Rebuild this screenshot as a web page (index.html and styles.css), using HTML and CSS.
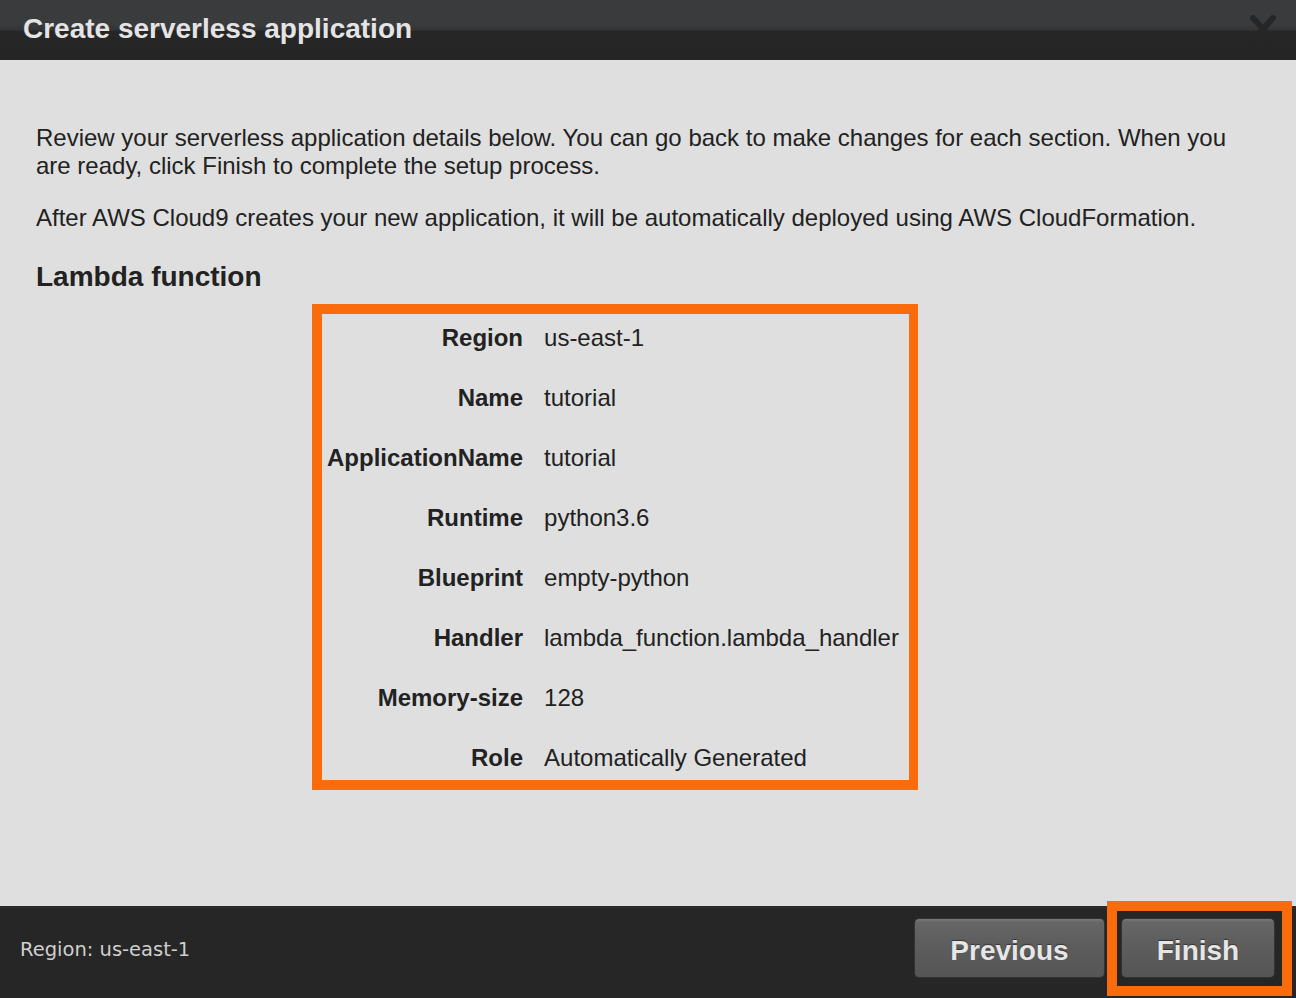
FILE: index.html
```html
<!DOCTYPE html>
<html>
<head>
<meta charset="utf-8">
<link rel="stylesheet" href="styles.css">
</head>
<body>
<div class="dialog">
  <header class="titlebar">
    <h1 class="title">Create serverless application</h1>
    <svg class="close" width="30" height="32" viewBox="0 0 30 32"><path d="M5 5 L25 27 M25 5 L5 27" stroke="#262626" stroke-width="6" stroke-linecap="round"/></svg>
  </header>
  <main class="content">
    <p class="para">Review your serverless application details below. You can go back to make changes for each section. When you are ready, click Finish to complete the setup process.</p>
    <p class="para">After AWS Cloud9 creates your new application, it will be automatically deployed using AWS CloudFormation.</p>
    <h2 class="section">Lambda function</h2>
    <div class="summary">
      <div class="grid">
        <div class="label">Region</div><div class="value">us-east-1</div>
        <div class="label">Name</div><div class="value">tutorial</div>
        <div class="label">ApplicationName</div><div class="value">tutorial</div>
        <div class="label">Runtime</div><div class="value">python3.6</div>
        <div class="label">Blueprint</div><div class="value">empty-python</div>
        <div class="label">Handler</div><div class="value">lambda_function.lambda_handler</div>
        <div class="label">Memory-size</div><div class="value">128</div>
        <div class="label">Role</div><div class="value">Automatically Generated</div>
      </div>
    </div>
  </main>
  <footer class="footer">
    <div class="region">Region: us-east-1</div>
    <div class="buttons">
      <button class="btn btn-prev">Previous</button>
      <div class="highlight"><button class="btn btn-finish">Finish</button></div>
    </div>
  </footer>
</div>
</body>
</html>
```
FILE: styles.css
```css
html, body {
  margin: 0;
  padding: 0;
  width: 1296px;
  height: 998px;
  overflow: hidden;
  background: #dfdfdf;
}
.dialog {
  display: flex;
  flex-direction: column;
  height: 998px;
  font-family: "Liberation Sans", Arial, sans-serif;
}
.titlebar {
  height: 60px;
  flex: none;
  display: flex;
  align-items: center;
  justify-content: space-between;
  padding: 0 18px 0 23px;
  box-sizing: border-box;
  background: linear-gradient(to bottom, #3a3b3d 0px, #3a3b3d 24px, #333436 30px, #262626 31px, #252525 60px);
}
.title {
  margin: 0;
  margin-top: -3px;
  font-size: 28px;
  font-weight: bold;
  color: #e4e4e4;
}
.close {
  margin-top: -2px;
}
.content {
  flex: 1;
  padding: 64px 36px 0 36px;
  box-sizing: border-box;
  color: #222;
}
.para {
  margin: 0 0 24px 0;
  font-size: 24px;
  line-height: 28px;
}
.section {
  margin: 29px 0 11px 0;
  font-size: 28px;
  line-height: 32px;
  font-weight: bold;
  color: #222;
}
.summary {
  margin-left: 276px;
  width: 606px;
  box-sizing: border-box;
  border: 10px solid #f96b0b;
  border-right-width: 9px;
  padding: 2px 11px 0 5px;
}
.grid {
  display: grid;
  grid-template-columns: auto 1fr;
  column-gap: 21px;
  row-gap: 16px;
  font-size: 24px;
  line-height: 44px;
}
.label {
  text-align: right;
  font-weight: bold;
}
.value {
  white-space: nowrap;
}
.footer {
  height: 92px;
  flex: none;
  box-sizing: border-box;
  border-top: 3px solid #2b2b2b;
  background: #262626;
  display: flex;
  align-items: center;
  justify-content: space-between;
  padding: 0 4px 0 20px;
}
.region {
  font-family: "DejaVu Sans", Tahoma, sans-serif;
  font-size: 19.5px;
  color: #cfcfcf;
  margin-top: -9px;
}
.buttons {
  display: flex;
  align-items: flex-start;
  gap: 2px;
  align-self: flex-start;
  margin-top: -8px;
}
.btn {
  width: 191px;
  height: 60px;
  border: 1px solid #333;
  border-radius: 5px;
  background: linear-gradient(to bottom, #7a7a7a 0px, #666 3px, #5e5e5e 40%, #555 100%);
  color: #e6e6e6;
  font-family: "Liberation Sans", Arial, sans-serif;
  font-size: 28px;
  font-weight: bold;
  text-shadow: 0 -1px 1px #333;
  padding: 5px 0 0 0;
}
.btn-prev {
  margin-top: 17px;
}
.highlight {
  border: 10px solid #f96b0b;
  padding: 7px 7px 8px 4px;
  background: #262626;
}
.btn-finish {
  width: 154px;
}
```
